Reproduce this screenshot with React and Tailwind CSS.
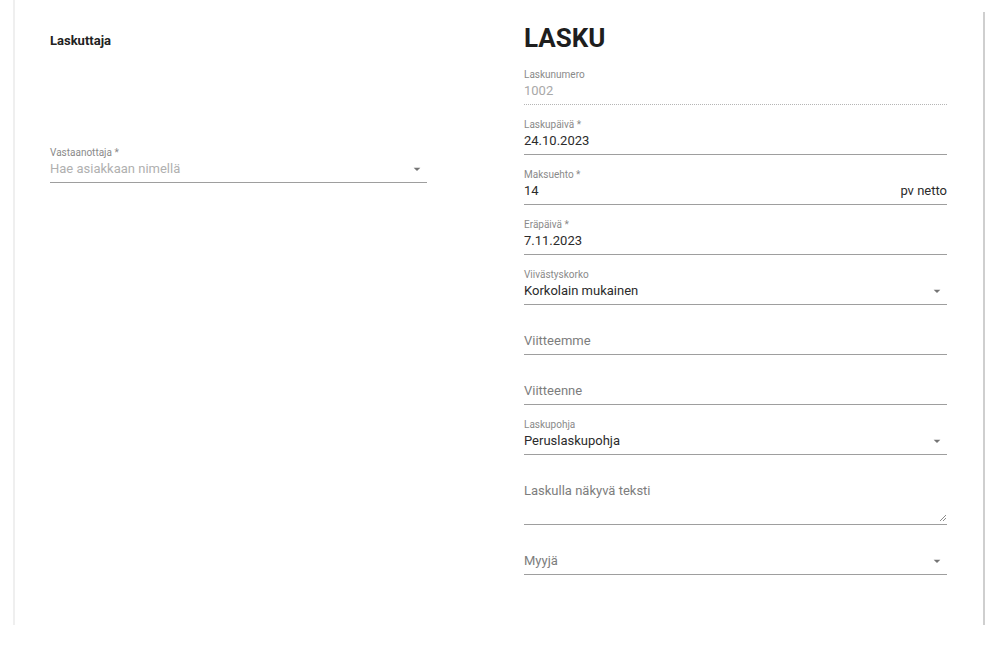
import React from "react";

const Arrow = () => (
  <svg width="20" height="20" viewBox="0 0 24 24" className="shrink-0 text-[#757575]">
    <path d="M8 10.5l4 4 4-4z" fill="currentColor" />
  </svg>
);

const Field = ({ label, value, placeholder, select, suffix, disabled, dotted }) => {
  const line = dotted
    ? "border-b border-dotted border-[#b5b5b5]"
    : "border-b border-[#9e9e9e]";
  return (
    <div className="mb-[13px]">
      <div className="h-[13px] text-[10px] leading-[14px] text-[#8a8a8a]">{label}</div>
      <div className={`flex items-center h-[24px] pb-[3px] ${line}`}>
        <div className="h-[20px] flex-1 text-[13px] leading-[20px]">
          {value ? (
            <span className={disabled ? "text-[#a8a8a8]" : "text-[#2b2b2b]"}>{value}</span>
          ) : (
            <span className="text-[#7d7d7d]">{placeholder}</span>
          )}
        </div>
        {suffix && <span className="text-[13px] leading-[20px] text-[#2b2b2b]">{suffix}</span>}
        {select && (
          <div className="mr-[0px]">
            <Arrow />
          </div>
        )}
      </div>
    </div>
  );
};

const TextArea = () => (
  <div className="mb-[13px]">
    <div className="h-[13px]" />
    <div className="relative h-[44px] border-b border-[#9e9e9e]">
      <div className="text-[13px] leading-[20px] text-[#7d7d7d]">Laskulla näkyvä teksti</div>
      <svg width="8" height="8" viewBox="0 0 8 8" className="absolute right-0 bottom-[2px]">
        <path d="M7 1L1 7M7 4L4 7" stroke="#8c8c8c" strokeWidth="1" />
      </svg>
    </div>
  </div>
);

export default function App() {
  return (
    <div
      className="w-[1000px] h-[667px] bg-white flex"
      style={{ fontFamily: "Roboto, 'Liberation Sans', sans-serif" }}
    >
      <div className="ml-[13px] w-[970px] h-[625px] border-l-2 border-[#efefef] flex pt-[21px]">
        <div className="ml-[35px] w-[377px]">
          <div className="mt-[10px] h-[20px] text-[13px] leading-[20px] font-bold text-[#222]">
            Laskuttaja
          </div>
          <div className="mt-[95px]">
            <div className="h-[13px] text-[10px] leading-[14px] text-[#8a8a8a]">Vastaanottaja *</div>
            <div className="flex items-center h-[24px] pb-[3px] border-b border-[#9e9e9e]">
              <div className="flex-1 text-[13px] leading-[20px] text-[#b0b0b0]">Hae asiakkaan nimellä</div>
              <div>
                <Arrow />
              </div>
            </div>
          </div>
        </div>
        <div className="ml-[97px] w-[423px]">
          <div className="h-[32px] text-[26px] leading-[34px] font-bold text-[#1e1e1e]">LASKU</div>
          <div className="mt-[15px]">
            <Field label="Laskunumero" value="1002" disabled dotted />
            <Field label="Laskupäivä *" value="24.10.2023" />
            <Field label="Maksuehto *" value="14" suffix="pv netto" />
            <Field label="Eräpäivä *" value="7.11.2023" />
            <Field label="Viivästyskorko" value="Korkolain mukainen" select />
            <Field label="" placeholder="Viitteemme" />
            <Field label="" placeholder="Viitteenne" />
            <Field label="Laskupohja" value="Peruslaskupohja" select />
            <TextArea />
            <Field label="" placeholder="Myyjä" select />
          </div>
        </div>
      </div>
      <div className="mt-[12px] w-[2px] h-[613px] bg-[#cfcfcf]" />
    </div>
  );
}
